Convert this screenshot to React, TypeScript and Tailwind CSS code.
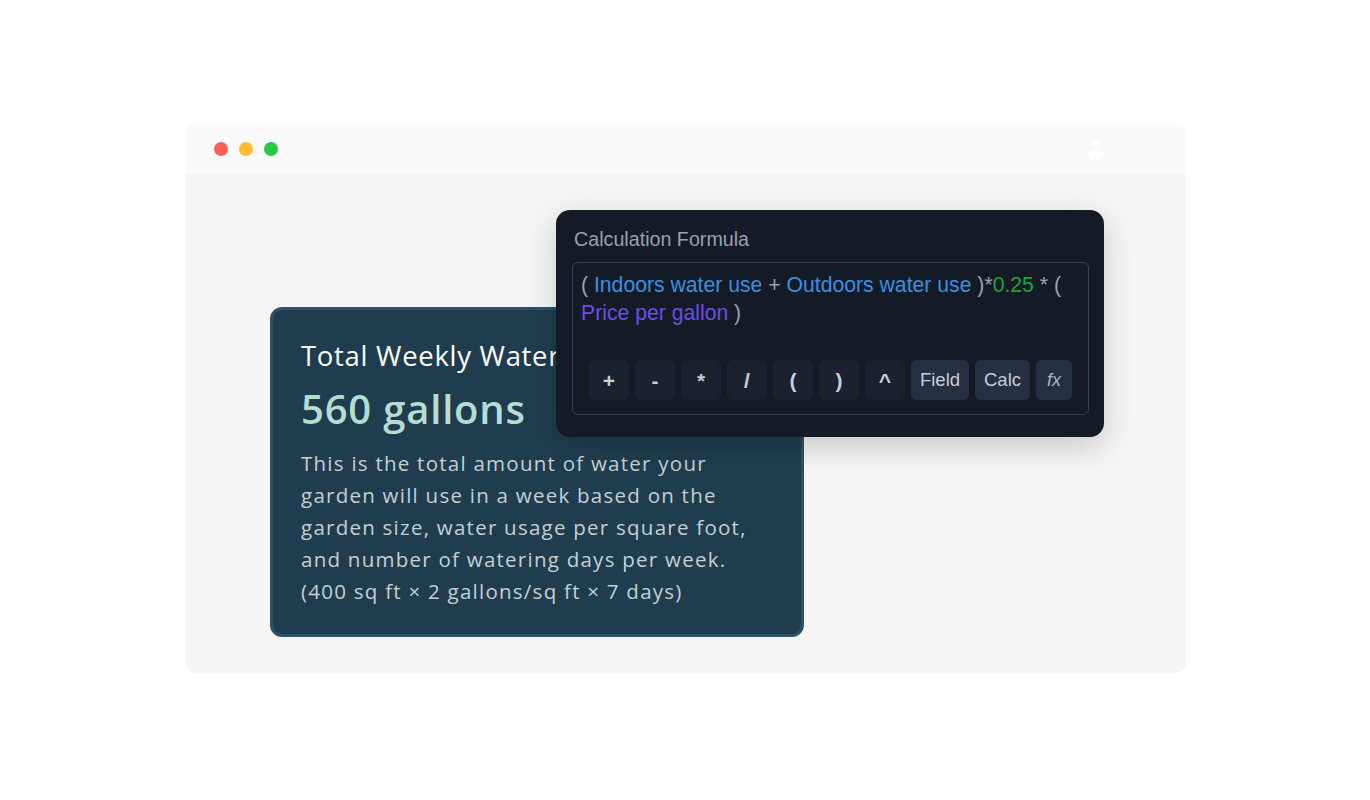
const OPS = ['+', '-', '*', '/', '(', ')', '^']

function FormulaPanel() {
  return (
    <div className="absolute left-[370px] top-[36px] w-[548px] rounded-[14px] bg-[#141b27] pl-[16px] pr-[15px] pt-[18px] pb-[22px] shadow-[0_10px_30px_rgba(0,0,0,0.18)] font-['Liberation_Sans',Arial,sans-serif]">
      <div className="pl-[2px] text-[19.7px] leading-[22px] text-[#9aa1ab]">Calculation Formula</div>
      <div className="mt-[12px] h-[153px] rounded-[6px] border-[1.5px] border-[#394352] px-2 pt-[8px]">
        <div className="text-[21.2px] leading-[28px] text-[#9aa3ad]">
          ( <span className="text-[#3b8fe0]">Indoors water use</span> +{' '}
          <span className="text-[#3b8fe0]">Outdoors water use</span> )*
          <span className="text-[#21a33f]">0.25</span> * (
          <br />
          <span className="text-[#6a4fe0]">Price per gallon</span> )
        </div>
        <div className="mt-[33px] flex items-center gap-[6px] pl-2">
          {OPS.map((op) => (
            <div
              key={op}
              className="flex h-[40px] w-[40px] items-center justify-center rounded-[6px] bg-[#1a2230] pt-[2px] text-[21px] font-bold text-[#c7ced8]"
            >
              {op}
            </div>
          ))}
          <div className="flex h-[40px] w-[58px] items-center justify-center rounded-[6px] bg-[#253042] text-[18.5px] text-[#c7ced8]">
            Field
          </div>
          <div className="flex h-[40px] w-[55px] items-center justify-center rounded-[6px] bg-[#253042] text-[18.5px] text-[#c7ced8]">
            Calc
          </div>
          <div className="flex h-[40px] w-[36px] items-center justify-center rounded-[6px] bg-[#253042] text-[18px] italic text-[#aab3bf]">
            fx
          </div>
        </div>
      </div>
    </div>
  )
}

function ResultCard() {
  return (
    <div className="h-[330px] w-[534px] rounded-[12px] border-[3px] border-[#2d5166] bg-[#1f3d4f] px-[28px] pt-[29px] font-['Open_Sans',sans-serif]">
      <div className="whitespace-nowrap text-[27.5px] leading-[34px] tracking-[0.7px] text-white">Total Weekly Water Usage</div>
      <div className="mt-[13px] text-[40px] font-semibold leading-[46px] tracking-[0.8px] text-[#b6ddd2]">560 gallons</div>
      <p className="mt-[15px] whitespace-nowrap text-[20.5px] leading-[32px] tracking-[1.25px] text-[#c6cfd4]">
        This is the total amount of water your
        <br />
        garden will use in a week based on the
        <br />
        garden size, water usage per square foot,
        <br />
        and number of watering days per week.
        <br />
        (400 sq ft × 2 gallons/sq ft × 7 days)
      </p>
    </div>
  )
}

export default function App() {
  return (
    <div className="min-h-[800px] w-full bg-white pt-[124px]">
      <div className="ml-[186px] h-[549px] w-[1000px] overflow-hidden rounded-[10px] bg-[#f5f5f5]">
        <div className="flex h-[50px] items-center justify-between bg-[#fafafa] pl-[28px] pr-[80px]">
          <div className="flex gap-[11px]">
            <span className="h-[14px] w-[14px] rounded-full bg-[#ff5f57]" />
            <span className="h-[14px] w-[14px] rounded-full bg-[#febc2e]" />
            <span className="h-[14px] w-[14px] rounded-full bg-[#28c840]" />
          </div>
          <svg width="18" height="22" viewBox="0 0 18 22" fill="#ffffff">
            <rect x="3" y="1" width="10" height="8" rx="3" />
            <rect x="1" y="12" width="12" height="8" rx="3" />
          </svg>
        </div>
        <div className="relative pl-[84px] pt-[133px]">
          <ResultCard />
          <FormulaPanel />
        </div>
      </div>
    </div>
  )
}
